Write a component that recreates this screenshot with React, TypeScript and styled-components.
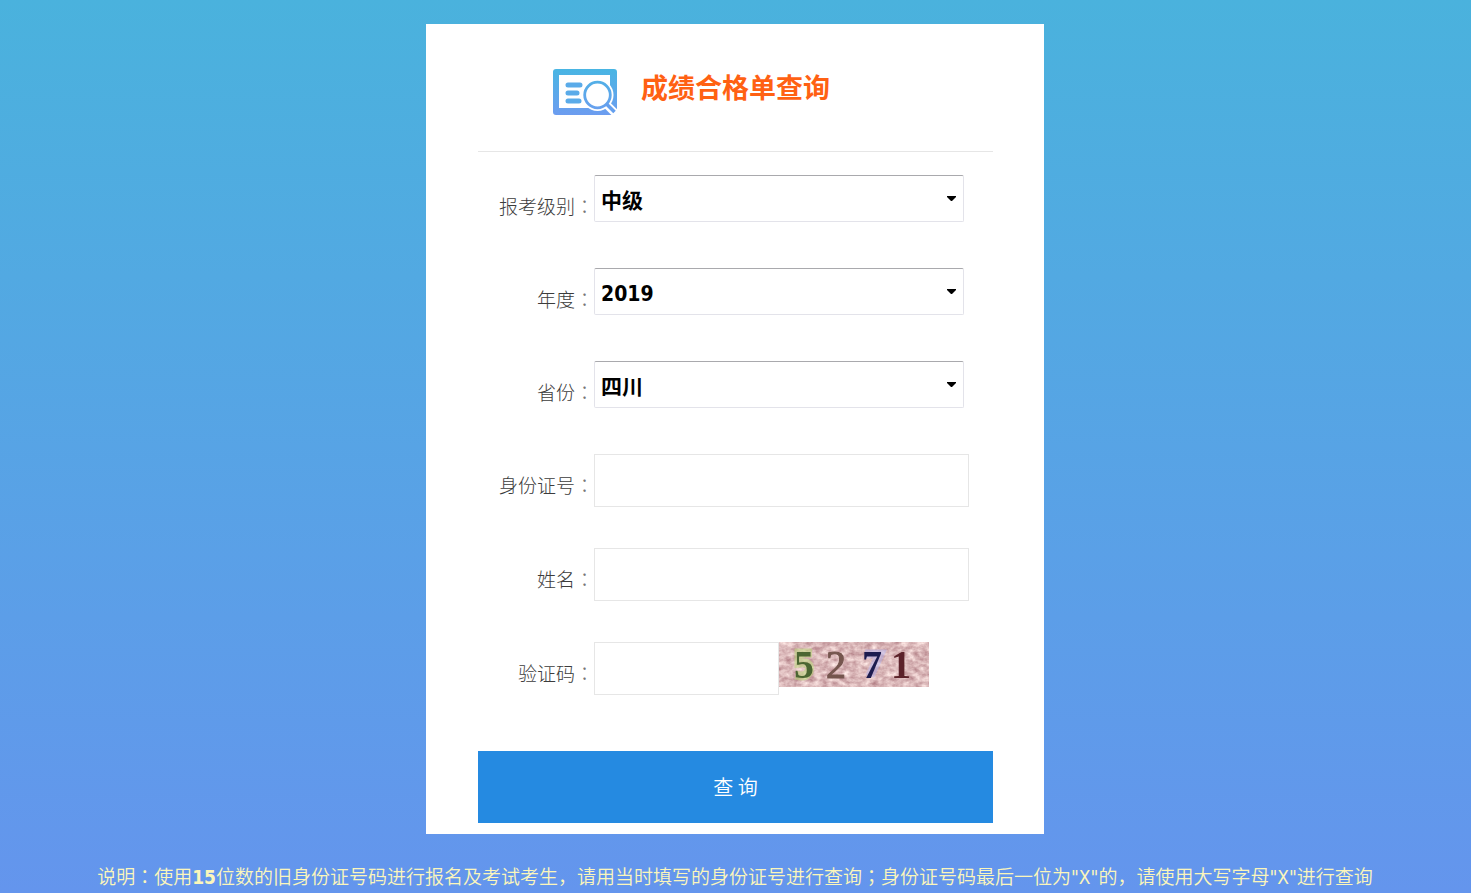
import React from "react";
import styled, { createGlobalStyle } from "styled-components";

const fontStack = `"DejaVu Sans Condensed", "Noto Sans CJK SC", sans-serif`;

const GlobalStyle = createGlobalStyle`
  * { box-sizing: border-box; }
  body {
    margin: 0;
    font-family: ${fontStack};
    font-size: 19px;
    color: #3c3c3c;
  }
`;

const Page = styled.div`
  min-height: 100vh;
  padding: 24px 1px 0 0;
  display: flex;
  flex-direction: column;
  align-items: center;
  background: linear-gradient(#4ab2dd, #6495ed);
`;

const Card = styled.form`
  width: 42%;
  min-width: 618px;
  padding: 0 51px 11px 52px;
  background: #fff;
`;

const Header = styled.header`
  display: flex;
  align-items: flex-start;
  gap: 23px;
  height: 128px;
  padding: 44px 0 0 74px;
  border-bottom: 1px solid #e6e6e6;
`;

const Title = styled.h1`
  margin: 0;
  font-family: "Noto Sans CJK SC", sans-serif;
  font-size: 27px;
  line-height: 38px;
  font-weight: 700;
  color: #ff6113;
`;

const Rows = styled.div`
  padding: 23px 0 0;
`;

const Row = styled.div<{ $gap: number }>`
  display: flex;
  align-items: flex-start;
  margin-bottom: ${(p) => p.$gap}px;
`;

const Label = styled.label`
  width: 116px;
  padding-top: 18px;
  text-align: right;
  font-weight: 300;
  line-height: 28px;
`;

const Colon = styled.span`
  color: #777;
`;

const SelectBox = styled.div`
  width: 370px;
  height: 47px;
  position: relative;
`;

const Select = styled.select`
  appearance: none;
  display: block;
  width: 100%;
  height: 47px;
  padding: 4px 6px 0;
  border: 1px solid #e3e3ea;
  border-top-color: #a9a9ad;
  border-radius: 2px;
  background: #fff;
  color: #000;
  font: 700 21px ${fontStack};
`;

const Arrow = styled.svg`
  position: absolute;
  right: 8px;
  top: 21px;
  pointer-events: none;
`;

const Input = styled.input<{ $width: number }>`
  width: ${(p) => p.$width}px;
  height: 53px;
  padding: 0 6px;
  border: 1px solid #e6e6e6;
  background: #fff;
  font: 700 21px ${fontStack};
`;

const Submit = styled.button`
  display: block;
  width: 100%;
  height: 72px;
  margin-top: 56px;
  padding: 0 0 2px;
  border: 0;
  background: #258ae1;
  color: #fff;
  font: 350 20px "Noto Sans CJK SC", sans-serif;
`;

const Note = styled.p`
  margin: 29px 0 0;
  line-height: 28px;
  font-weight: 350;
  text-align: center;
  color: #fbf6bb;
`;

const HeaderIcon = () => (
  <svg width="66" height="48" viewBox="0 0 66 48" fill="none" aria-hidden="true">
    <defs>
      <linearGradient id="tone" gradientUnits="userSpaceOnUse" x1="0" y1="0" x2="0" y2="48">
        <stop offset="0" stopColor="#48b6e3" />
        <stop offset="1" stopColor="#6d9cf0" />
      </linearGradient>
    </defs>
    <path
      fill="url(#tone)"
      fillRule="evenodd"
      d="M4 1H62Q65 1 65 4V44Q65 47 62 47H4Q1 47 1 44V4Q1 1 4 1ZM7 7V40H58V7Z"
    />
    <path d="M53 35L68 50" stroke="#fff" strokeWidth="8" />
    <circle cx="45.5" cy="27" r="16" fill="#fff" />
    <circle cx="45.5" cy="27" r="12.8" stroke="url(#tone)" strokeWidth="2.8" />
    <path d="M54.5 36L62.5 44" stroke="#649fee" strokeWidth="3.6" />
    <path
      d="M16 17H28M16 25H25M16 33H27"
      stroke="#5aabe9"
      strokeWidth="5"
      strokeLinecap="round"
    />
  </svg>
);

const Captcha = () => (
  <svg width="150" height="45" viewBox="0 0 150 45" role="img" aria-label="验证码图片">
    <defs>
      <filter id="grain" x="0" y="0" width="100%" height="100%" colorInterpolationFilters="sRGB">
        <feTurbulence type="fractalNoise" baseFrequency="0.14 0.2" numOctaves="3" seed="8" />
        <feColorMatrix
          values="0.4 0 0 0 0.66
                  0.55 0 0 0 0.45
                  0.5 0 0 0 0.48
                  0 0 0 0 1"
        />
      </filter>
      <filter id="soft">
        <feGaussianBlur stdDeviation="0.7" />
      </filter>
    </defs>
    <rect width="150" height="45" filter="url(#grain)" />
    <g filter="url(#soft)" fontFamily="Liberation Serif, serif" fontSize="40" fontWeight="700">
      <g fill="none" strokeWidth="9" opacity="0.5">
        <path d="M33 11H20V21Q33 19 30 30Q26 36 17 33" stroke="#b9dc78" />
        <path d="M86 12H101L91 34" stroke="#b8baf4" />
      </g>
      <text x="15" y="36" fill="#4c6630">5</text>
      <text x="47" y="36" fill="#75554e" stroke="#75554e" fontWeight="400">2</text>
      <text x="83" y="36" fill="#1c1c50">7</text>
      <text x="112" y="36" fill="#5c2429">1</text>
    </g>
  </svg>
);

type PickProps = { id: string; label: string; value: string };

const Pick = ({ id, label, value }: PickProps) => (
  <Row $gap={46}>
    <Label htmlFor={id}>{label}<Colon lang="ja">：</Colon></Label>
    <SelectBox>
      <Select id={id} defaultValue={value}>
        <option value={value}>{value}</option>
      </Select>
      <Arrow width="9" height="5" viewBox="0 0 9 5" aria-hidden="true">
        <path d="M0 0H9V1L5 5H4L0 1Z" fill="#000" />
      </Arrow>
    </SelectBox>
  </Row>
);

export default function App() {
  return (
    <>
      <GlobalStyle />
      <Page lang="zh-CN">
        <Card onSubmit={(e) => e.preventDefault()}>
          <Header>
            <HeaderIcon />
            <Title>成绩合格单查询</Title>
          </Header>
          <Rows>
            <Pick id="level" label="报考级别" value="中级" />
            <Pick id="year" label="年度" value="2019" />
            <Pick id="province" label="省份" value="四川" />
            <Row $gap={41}>
              <Label htmlFor="idno">身份证号<Colon lang="ja">：</Colon></Label>
              <Input id="idno" type="text" $width={375} />
            </Row>
            <Row $gap={41}>
              <Label htmlFor="name">姓名<Colon lang="ja">：</Colon></Label>
              <Input id="name" type="text" $width={375} />
            </Row>
            <Row $gap={0}>
              <Label htmlFor="code">验证码<Colon lang="ja">：</Colon></Label>
              <Input id="code" type="text" $width={185} />
              <Captcha />
            </Row>
          </Rows>
          <Submit type="submit">查 询</Submit>
        </Card>
        <Note>
          说明<span lang="ja">：</span>使用<b>15</b>位数的旧身份证号码进行报名及考试考生，请用当时填写的身份证号进行查询<span lang="ja">；</span>身份证号码最后一位为"X"的，请使用大写字母"X"进行查询
        </Note>
      </Page>
    </>
  );
}
